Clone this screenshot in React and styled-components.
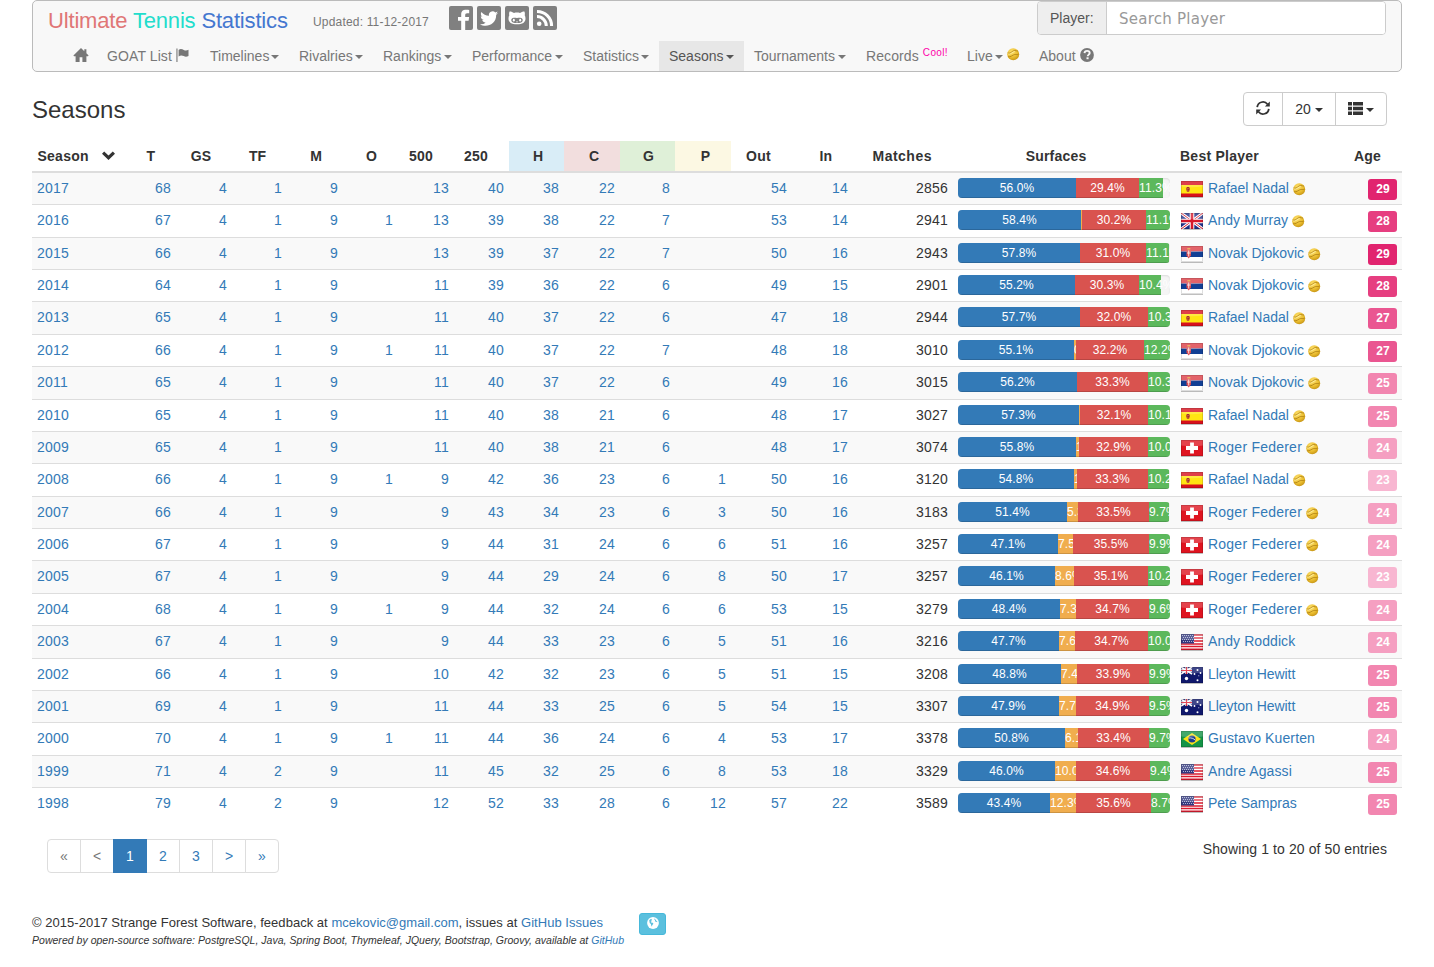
import React from 'react';
import styled, { createGlobalStyle } from 'styled-components';

const GlobalStyle = createGlobalStyle`
  * { box-sizing: border-box; }
  body {
    margin: 0;
    background: #fff;
    color: #333;
    font: 14px/20px "Liberation Sans", Arial, sans-serif;
    overflow: hidden;
  }
  svg { display: block; flex: none; }
`;

const Page = styled.div`
  width: 1370px;
  margin-left: 32px;
`;

/* ---------- navbar ---------- */

const Navbar = styled.header`
  height: 72px;
  background: #f8f8f8;
  border: 1px solid #bbb;
  border-radius: 5px;
`;

const NavTop = styled.div`
  display: flex;
  height: 40px;
  padding-left: 15px;
`;

const Brand = styled.a`
  width: 265px;
  padding-top: 7px;
  font-size: 22px;
  line-height: 26px;
  letter-spacing: -0.17px;
  white-space: nowrap;
`;

const BrandWord = styled.span`
  color: ${(p) => p.$color};
`;

const Updated = styled.span`
  width: 136px;
  padding-top: 11px;
  font-size: 12px;
  letter-spacing: 0.18px;
  color: #777;
  white-space: nowrap;
`;

const Social = styled.div`
  display: flex;
  gap: 4px;
  padding-top: 5px;
`;

const Search = styled.div`
  display: flex;
  width: 349px;
  height: 34px;
  margin-left: auto;
  margin-right: 15px;
  border: 1px solid #ccc;
  border-radius: 4px;
  background: #fff;
  overflow: hidden;
`;

const SearchLabel = styled.label`
  width: 69px;
  padding: 6px 12px;
  background: #eee;
  border-right: 1px solid #ccc;
  color: #555;
  line-height: 20px;
`;

const SearchInput = styled.input`
  flex: 1;
  min-width: 0;
  padding: 1px 12px 0;
  border: 0;
  outline: 0;
  background: #fff;
  font: 15px "DejaVu Sans", Verdana, sans-serif;
  letter-spacing: 0.25px;
  &::placeholder { color: #999; opacity: 1; }
`;

const NavMenu = styled.nav`
  display: flex;
  height: 30px;
  padding-left: 30px;
`;

const NavItem = styled.a`
  display: flex;
  align-items: center;
  width: ${(p) => p.$w}px;
  height: 30px;
  padding-left: 10px;
  letter-spacing: ${(p) => p.$ls || 0}px;
  color: ${(p) => (p.$active ? '#555' : '#777')};
  background: ${(p) => (p.$active ? '#e7e7e7' : 'transparent')};
  white-space: nowrap;
`;

const Caret = styled.i`
  width: 0;
  height: 0;
  margin-left: ${(p) => p.$gap ?? 2}px;
  margin-top: 2px;
  border: 4px solid transparent;
  border-top-color: currentColor;
  border-bottom: 0;
`;

const NavIcon = styled.span`
  display: inline-flex;
  margin-left: ${(p) => p.$gap || 0}px;
  margin-bottom: ${(p) => p.$lift || 0}px;
`;

const Cool = styled.sup`
  margin-left: 4px;
  margin-bottom: 7px;
  font-size: 10px;
  line-height: 10px;
  letter-spacing: 0.35px;
  color: #f0a;
`;

/* ---------- heading and toolbar ---------- */

const HeadingRow = styled.div`
  display: flex;
  justify-content: space-between;
  height: 69px;
  padding: 20px 15px 0 0;
`;

const Title = styled.h1`
  margin: 3px 0 0;
  font-size: 24px;
  font-weight: 400;
  line-height: 30px;
`;

const ButtonGroup = styled.div`
  display: flex;
  width: 144px;
  height: 34px;
  border: 1px solid #ccc;
  border-radius: 4px;
`;

const ToolButton = styled.button`
  display: flex;
  align-items: center;
  justify-content: center;
  width: ${(p) => p.$w}px;
  padding: 0;
  border: 0;
  border-left: ${(p) => (p.$first ? '0' : '1px solid #ccc')};
  background: none;
  color: #333;
  font: inherit;
`;

/* ---------- table ---------- */

const columns = `88px 56px 56px 55px 56px 55px 56px 55px 55px 56px 55px 56px 61px 61px 100px 222px 150px 77px`;

const HeadRow = styled.div`
  display: grid;
  grid-template-columns: ${columns};
  height: 32px;
  border-bottom: 2px solid #ddd;
  font-weight: 700;
`;

const HeadCell = styled.div`
  padding: 5px 21px 5px 5px;
  text-align: ${(p) => p.$align || 'right'};
  background: ${(p) => p.$bg || 'transparent'};
  letter-spacing: ${(p) => p.$ls || 0}px;
  white-space: nowrap;
`;

const SortHead = styled.div`
  display: flex;
  gap: 13px;
  padding: 5px 0 5px 5.5px;
  letter-spacing: 0.25px;
`;

const SortMark = styled.span`
  padding-top: 5px;
`;

const Row = styled.div`
  display: grid;
  grid-template-columns: ${columns};
  height: ${(p) => (p.$first ? 31.2 : 32.4)}px;
  padding-top: ${(p) => (p.$first ? 4.8 : 5)}px;
  border-top: ${(p) => (p.$first ? '0' : '1px solid #ddd')};
  background: ${(p) => (p.$odd ? '#f9f9f9' : '#fff')};
  color: #337ab7;
`;

const Cell = styled.div`
  padding: 0 5px;
  text-align: ${(p) => (p.$left ? 'left' : 'right')};
  color: ${(p) => (p.$plain ? '#333' : 'inherit')};
  letter-spacing: 0.2px;
`;

const Bar = styled.div`
  display: flex;
  width: 212px;
  height: 20px;
  margin-left: 5px;
  border-radius: 4px;
  overflow: hidden;
  background: #f5f5f5;
  box-shadow: inset 0 1px 2px rgba(0, 0, 0, 0.1);
`;

const Segment = styled.span`
  flex: none;
  height: 20px;
  background: ${(p) => p.$color};
  box-shadow: inset 0 -1px 0 rgba(0, 0, 0, 0.15);
  color: #fff;
  font-size: 12px;
  letter-spacing: 0.12px;
  text-align: center;
  white-space: nowrap;
`;

const Player = styled.div`
  display: flex;
  padding-left: 5px;
  letter-spacing: ${(p) => p.$ls || 0}px;
  white-space: nowrap;
`;

const FlagBox = styled.span`
  width: 28px;
  padding: 3px 0 0 1px;
`;

const BallBox = styled.span`
  padding: 5px 0 0 4px;
`;

const AgeCell = styled.div`
  display: flex;
  justify-content: flex-end;
  padding: 1px 5px 0 0;
`;

const AgeBadge = styled.span`
  width: 29px;
  height: 21px;
  padding-left: 1px;
  border-radius: 3px;
  background: ${(p) => p.$color};
  color: #fff;
  font-size: 12px;
  font-weight: 700;
  line-height: 20px;
  letter-spacing: 0.2px;
  text-align: center;
`;

/* ---------- below the table ---------- */

const TableFooter = styled.div`
  display: flex;
  justify-content: space-between;
  height: 54px;
  margin-top: 19.2px;
  padding: 0 15px;
`;

const Pager = styled.ul`
  display: flex;
  margin: 0;
  padding: 0;
  list-style: none;
`;

const PagerItem = styled.li`
  width: 34px;
  height: 34px;
  margin-right: -1px;
  padding: 6px 0;
  border: 1px solid ${(p) => (p.$active ? '#337ab7' : '#ddd')};
  position: relative;
  z-index: ${(p) => (p.$active ? 1 : 0)};
  background: ${(p) => (p.$active ? '#337ab7' : '#fff')};
  color: ${(p) => (p.$active ? '#fff' : p.$disabled ? '#777' : '#337ab7')};
  text-align: center;
  &:first-child { border-radius: 4px 0 0 4px; }
  &:last-child { border-radius: 0 4px 4px 0; }
`;

const Showing = styled.div`
  letter-spacing: 0.1px;
`;

const Footer = styled.footer`
  display: flex;
  gap: 15px;
  padding-top: 20px;
`;

const FooterText = styled.div`
  width: 592px;
  white-space: nowrap;
`;

const Copyright = styled.div`
  font-size: 13px;
  line-height: 20px;
  letter-spacing: 0.03px;
`;

const Powered = styled.div`
  font-size: 10.5px;
  font-style: italic;
  line-height: 14px;
  letter-spacing: 0.025px;
`;

const Link = styled.a`
  color: #337ab7;
`;

const GlobeButton = styled.button`
  display: grid;
  place-items: center;
  width: 27px;
  height: 22px;
  padding: 0 0 2px;
  border: 1px solid #46b8da;
  border-radius: 3px;
  background: #5bc0de;
  color: #fff;
`;

/* ---------- icons ---------- */

const HomeIcon = () => (
  <svg width="16" height="16" viewBox="0 0 16 16" fill="currentColor">
    <path d="M8 0 .4 7.4l.6.9h1.6V14h4V9.3h2.8V14h4V8.3H15l.6-.9-2.2-2.2V1.2h-2.1v2z" />
  </svg>
);

const FlagIcon = () => (
  <svg width="13" height="14" viewBox="0 0 13 14" fill="currentColor">
    <path d="M.4.6h1.1V14H.4z" />
    <path d="M2.6 1.9C4.6.3 6.3 1.3 7.8 2c1.6.8 3.3.7 4.7-.3v6.2c-1.6 1-3.2 1-4.8.2-1.700-.8-3.400-.9-5.100.5z" />
  </svg>
);

const QuestionIcon = () => (
  <svg width="14" height="14" viewBox="0 0 14 14">
    <circle cx="7" cy="7" r="6.9" fill="currentColor" />
    <path d="M4.500 5.100C4.600 3.600 5.600 2.900 7.100 2.900s2.600.8 2.600 2.100c0 1.500-2 1.700-2 3.200" fill="none" stroke="#f8f8f8" strokeWidth="1.900" />
    <path d="M6.500 9.300h2.100v1.900H6.500z" fill="#f8f8f8" />
  </svg>
);

const RefreshIcon = () => (
  <svg width="14" height="16" viewBox="0 0 14 16" fill="none" stroke="currentColor" strokeWidth="1.800">
    <path d="M1.200 6.200A5.800 5.800 0 0 1 11.500 3.200M12.800 7.800A5.800 5.800 0 0 1 2.500 10.800" />
    <path d="M13.800 .6v4.900H8.900zM.2 13.400V8.500h4.900z" fill="currentColor" stroke="none" />
  </svg>
);

const ListIcon = () => (
  <svg width="15" height="14" viewBox="0 0 15 14" fill="currentColor">
    <path d="M0 0h4v3.500H0zM5 0h10v3.500H5zM0 4.700h4v3.500H0zM5 4.700h10v3.500H5zM0 9.400h4v3.500H0zM5 9.400h10v3.500H5z" />
  </svg>
);

const ChevronIcon = () => (
  <svg width="13" height="9" viewBox="0 0 13 9" fill="currentColor">
    <path d="M2.200.5 6.500 4.500 10.800.5 13 2.700 6.500 9 0 2.700z" />
  </svg>
);

const GlobeIcon = () => (
  <svg width="12" height="12" viewBox="0 0 12 12">
    <circle cx="6" cy="6" r="5.900" fill="#fff" />
    <path d="M2.200 3.200 4 1.800l1 .5-.8 1 .8.700-1.200.8.3.8 1.600.2.700 1-1.200 1.400-.2 1.500-.8-1.200-.3-1.500-1.200-1zM7.500 1.400l.9.500-.4.700 1.400.5-.4.8 1.200.4v1l-1.300-.5-1-.6.2-1-.8-.6z" fill="#5bc0de" />
  </svg>
);

const BallIcon = () => (
  <svg width="13" height="13" viewBox="0 0 13 13">
    <defs>
      <radialGradient id="ball" cx=".4" cy=".3" r=".8">
        <stop offset="0" stopColor="#ffe26e" />
        <stop offset=".6" stopColor="#e8ba2c" />
        <stop offset="1" stopColor="#bd8a12" />
      </radialGradient>
    </defs>
    <circle cx="6.200" cy="6.200" r="6" fill="url(#ball)" />
    <path d="M.7 4.900C3.300 6.200 5 2.700 7.700 2.500c1.500-.1 2.400.8 3.400.6M1.100 8.700c2.500.9 4.300-1.900 6.700-2.200 1.500-.2 2.400.4 3.900-.4" fill="none" stroke="#a97a10" strokeWidth=".9" opacity=".85" />
    <path d="M.9 6C3.600 7.100 5.300 3.800 7.800 3.500" fill="none" stroke="#fff3b0" strokeWidth=".7" />
  </svg>
);

const SocialTile = ({ children }) => (
  <svg width="24" height="24" viewBox="0 0 24 24" fill="#fff">
    <rect width="24" height="24" rx="2" fill="#808080" />
    {children}
  </svg>
);

const FacebookIcon = () => (
  <SocialTile>
    <path d="M12.200 24v-9.300H9V11h3.200V8.300C12.200 5 14.100 3.700 17 3.700c1.400 0 2.400.1 3.200.2v3.400h-2c-1.600 0-2 .8-2 1.900V11h3.900l-.5 3.700h-3.400V24z" />
  </SocialTile>
);

const TwitterIcon = () => (
  <SocialTile>
    <path d="M21 6.900c-.7.3-1.300.5-2 .6.700-.5 1.300-1.100 1.600-2-.7.400-1.500.7-2.300.9a3.700 3.700 0 0 0-6.300 3.400C8.900 9.700 6.200 8.200 4.400 5.900c-1 1.700-.5 3.800 1.100 4.900-.6 0-1.200-.2-1.700-.5 0 1.800 1.300 3.300 3 3.700-.6.100-1.100.2-1.700.1.500 1.500 1.800 2.500 3.500 2.600A7.500 7.500 0 0 1 3 18.200c5.500 3.500 16.200 1.300 16.200-9.400.700-.5 1.300-1.100 1.800-1.900z" />
  </SocialTile>
);

const GithubIcon = () => (
  <SocialTile>
    <path d="M4.600 5.400c1.500-.1 3 .5 4.400 1.500 2-.4 4-.4 6 0 1.400-1 2.900-1.600 4.400-1.500.6 1.400.6 2.700.3 3.900.6.900.8 2 .8 3.100 0 4-3 5.800-8.500 5.800s-8.500-1.800-8.500-5.800c0-1.100.2-2.200.8-3.100-.3-1.200-.3-2.500.3-3.900z" />
    <path d="M8 11.900c1.400-.3 2.700.1 4 .1s2.600-.4 4-.1c1.300.3 1.900 1.200 1.700 2.500-.3 1.900-2.200 2.500-5.700 2.500s-5.400-.6-5.700-2.500c-.2-1.300.4-2.200 1.700-2.500z" fill="#808080" />
    <ellipse cx="8.800" cy="14.200" rx="1" ry="1.400" />
    <ellipse cx="15.200" cy="14.200" rx="1" ry="1.400" />
    <path d="M11.200 15.400h1.600v.8h-1.600z" />
  </SocialTile>
);

const RssIcon = () => (
  <SocialTile>
    <circle cx="6.200" cy="17.800" r="2.300" />
    <path d="M4 10.600A9.300 9.300 0 0 1 13.300 19.900M4 5.400A14.500 14.500 0 0 1 18.600 19.900" fill="none" stroke="#fff" strokeWidth="3" />
  </SocialTile>
);

const flagArt = {
  es: (
    <>
      <path d="M0 0h22v16H0z" fill="#d8101c" />
      <path d="M0 4h22v8.500H0z" fill="#ffe512" />
      <path d="M5 6.500h4v2l-1 2.500H6L5 8.500z" fill="#c4622d" />
      <path d="M6 6h2v1H6zM6.500 8h1.500v1.500H6.500z" fill="#9c2f38" />
    </>
  ),
  gb: (
    <>
      <path d="M0 0h22v16H0z" fill="#1f2f86" />
      <path d="m0 0 22 16M22 0 0 16" stroke="#fff" strokeWidth="3" />
      <path d="m0 0 22 16M22 0 0 16" stroke="#d7172b" strokeWidth="1" />
      <path d="M11 0v16M0 8h22" stroke="#fff" strokeWidth="4.600" />
      <path d="M11 0v16M0 8h22" stroke="#d7172b" strokeWidth="2.600" />
    </>
  ),
  rs: (
    <>
      <path d="M0 0h22v16H0z" fill="#fff" />
      <path d="M0 0h22v5.500H0z" fill="#dc3c45" />
      <path d="M0 5.500h22v5.500H0z" fill="#123f94" />
      <path d="M5.500 4h4.500v5.500L7.700 12.500 5.500 9.500z" fill="#dc4a50" />
      <path d="M6.300 2h3v1.500h-3z" fill="#e8a13b" />
      <path d="M7.700 4.500v6M6 7h3.500" stroke="#fff" strokeWidth=".8" />
    </>
  ),
  ch: (
    <>
      <path d="M0 0h22v16H0z" fill="#df1420" />
      <path d="M9.100 2.500h3.800v3.600H17v3.800h-4.100v3.600H9.100V9.900H5V6.100h4.100z" fill="#fff" />
    </>
  ),
  us: (
    <>
      <path d="M0 0h22v16H0z" fill="#fff" />
      <path d="M0 1h22M0 4h22M0 7h22M0 10h22M0 12.500h22M0 15.200h22" stroke="#dc1b2e" strokeWidth="1.500" />
      <path d="M0 0h13v9.500H0z" fill="#33397f" />
      <path d="M1 1.500h12M2 3.500h11M1 5.500h12M2 7.500h11" stroke="#b9bedb" strokeWidth=".9" strokeDasharray="1 1" />
    </>
  ),
  au: (
    <>
      <path d="M0 0h22v16H0z" fill="#10186c" />
      <path d="m0 0 11 7M11 0 0 7" stroke="#fff" strokeWidth="1.600" />
      <path d="M5.500 0v7M0 3.500h11" stroke="#fff" strokeWidth="2.400" />
      <path d="M5.500 0v7M0 3.500h11" stroke="#dc1b2e" strokeWidth="1.200" />
      <g fill="#fff">
        <circle cx="5.500" cy="11.500" r="1.700" />
        <circle cx="16.500" cy="3" r="1" />
        <circle cx="13.500" cy="7" r=".9" />
        <circle cx="19.500" cy="6" r=".9" />
        <circle cx="16.500" cy="13.300" r="1" />
        <circle cx="17.800" cy="8.800" r=".5" />
      </g>
    </>
  ),
  br: (
    <>
      <path d="M0 0h22v16H0z" fill="#149447" />
      <path d="m11 2 9 6-9 6-9-6z" fill="#fbe219" />
      <circle cx="11" cy="8" r="3.600" fill="#1d3d8c" />
      <path d="M7.600 7c2.600-.4 5 .4 6.700 2.200" fill="none" stroke="#fff" strokeWidth=".8" />
    </>
  ),
};

const Flag = ({ code }) => (
  <svg width="22" height="18" viewBox="0 0 22 18">
    <path d="M0 1h22v16H0z" fill="#000" opacity=".25" />
    {flagArt[code]}
    <path d="M0 0h22v5.500Q11 7 0 5.500z" fill="#fff" opacity=".2" />
    <path d="M.5.5h21v15H.5z" fill="none" stroke="#000" opacity=".13" />
  </svg>
);

/* ---------- data ---------- */

const blue = '#337ab7';
const orange = '#f0ad4e';
const red = '#d9534f';
const green = '#5cb85c';

const ageColors = { 29: '#e1246f', 28: '#e63e80', 27: '#ea5691', 25: '#f286b0', 24: '#f59fc1', 23: '#f8b6d1' };

/* name, flag, still active, tracking */
const players = {
  nadal: ['Rafael Nadal', 'es', true, 0],
  murray: ['Andy Murray', 'gb', true, 0.07],
  djokovic: ['Novak Djokovic', 'rs', true, -0.03],
  federer: ['Roger Federer', 'ch', true, 0.23],
  roddick: ['Andy Roddick', 'us', false, 0.07],
  hewitt: ['Lleyton Hewitt', 'au', false, -0.05],
  kuerten: ['Gustavo Kuerten', 'br', false, 0.13],
  agassi: ['Andre Agassi', 'us', false, 0.12],
  sampras: ['Pete Sampras', 'us', false, 0],
};

/* counts: T GS TF M O 500 250 H C G P Out In; surfaces: [label, right edge] for hard, carpet, clay, grass */
const seasons = [
  [2017, '68 4 1 9 - 13 40 38 22 8 - 54 14', 2856, ['56.0%', 118], null, ['29.4%', 181], ['11.3%', 205], 'nadal', 29],
  [2016, '67 4 1 9 1 13 39 38 22 7 - 53 14', 2941, ['58.4%', 123], ['', 124], ['30.2%', 188], ['11.1%', 212], 'murray', 28],
  [2015, '66 4 1 9 - 13 39 37 22 7 - 50 16', 2943, ['57.8%', 122], null, ['31.0%', 188], ['11.1%', 211], 'djokovic', 29],
  [2014, '64 4 1 9 - 11 39 36 22 6 - 49 15', 2901, ['55.2%', 117], null, ['30.3%', 181], ['10.4%', 203], 'djokovic', 28],
  [2013, '65 4 1 9 - 11 40 37 22 6 - 47 18', 2944, ['57.7%', 122], null, ['32.0%', 190], ['10.3%', 212], 'nadal', 27],
  [2012, '66 4 1 9 1 11 40 37 22 7 - 48 18', 3010, ['55.1%', 116], ['0.5%', 118], ['32.2%', 186], ['12.2%', 212], 'djokovic', 27],
  [2011, '65 4 1 9 - 11 40 37 22 6 - 49 16', 3015, ['56.2%', 119], null, ['33.3%', 190], ['10.3%', 212], 'djokovic', 25],
  [2010, '65 4 1 9 - 11 40 38 21 6 - 48 17', 3027, ['57.3%', 121], ['', 122], ['32.1%', 190], ['10.1%', 212], 'nadal', 25],
  [2009, '65 4 1 9 - 11 40 38 21 6 - 48 17', 3074, ['55.8%', 118], ['1.3%', 121], ['32.9%', 190], ['10.0%', 212], 'federer', 24],
  [2008, '66 4 1 9 1 9 42 36 23 6 1 50 16', 3120, ['54.8%', 116], ['1.6%', 119], ['33.3%', 190], ['10.2%', 211], 'nadal', 23],
  [2007, '66 4 1 9 - 9 43 34 23 6 3 50 16', 3183, ['51.4%', 109], ['5.3%', 120], ['33.5%', 191], ['9.7%', 211], 'federer', 24],
  [2006, '67 4 1 9 - 9 44 31 24 6 6 51 16', 3257, ['47.1%', 100], ['7.5%', 115], ['35.5%', 191], ['9.9%', 212], 'federer', 24],
  [2005, '67 4 1 9 - 9 44 29 24 6 8 50 17', 3257, ['46.1%', 97], ['8.6%', 116], ['35.1%', 190], ['10.2%', 212], 'federer', 23],
  [2004, '68 4 1 9 1 9 44 32 24 6 6 53 15', 3279, ['48.4%', 102], ['7.3%', 118], ['34.7%', 191], ['9.6%', 212], 'federer', 24],
  [2003, '67 4 1 9 - 9 44 33 23 6 5 51 16', 3216, ['47.7%', 101], ['7.6%', 117], ['34.7%', 190], ['10.0%', 212], 'roddick', 24],
  [2002, '66 4 1 9 - 10 42 32 23 6 5 51 15', 3208, ['48.8%', 103], ['7.4%', 119], ['33.9%', 191], ['9.9%', 212], 'hewitt', 25],
  [2001, '69 4 1 9 - 11 44 33 25 6 5 54 15', 3307, ['47.9%', 101], ['7.7%', 118], ['34.9%', 191], ['9.5%', 212], 'hewitt', 25],
  [2000, '70 4 1 9 1 11 44 36 24 6 4 53 17', 3378, ['50.8%', 107], ['6.1%', 120], ['33.4%', 191], ['9.7%', 212], 'kuerten', 24],
  [1999, '71 4 2 9 - 11 45 32 25 6 8 53 18', 3329, ['46.0%', 97], ['10.0%', 118], ['34.6%', 192], ['9.4%', 212], 'agassi', 25],
  [1998, '79 4 2 9 - 12 52 33 28 6 12 57 22', 3589, ['43.4%', 92], ['12.3%', 118], ['35.6%', 193], ['8.7%', 212], 'sampras', 25],
];

const headers = [
  ['T'], ['GS'], ['TF'], ['M'], ['O'], ['500', null, 0.2], ['250', null, 0.2],
  ['H', '#d9edf7'], ['C', '#f2dede'], ['G', '#dff0d8'], ['P', '#fcf8e3'],
  ['Out', null, 0.3], ['In'], ['Matches', null, 0.5],
];

const SurfaceBar = ({ parts }) => {
  let start = 0;
  return (
    <Bar>
      {parts.map((part, i) => {
        if (!part) return null;
        const width = part[1] - start;
        start = part[1];
        return (
          <Segment key={i} $color={[blue, orange, red, green][i]} style={{ width }}>
            {part[0]}
          </Segment>
        );
      })}
    </Bar>
  );
};

const SeasonRow = ({ data, index }) => {
  const [year, counts, matches, hard, carpet, clay, grass, who, age] = data;
  const [name, code, active, tracking] = players[who];
  return (
    <Row $first={index === 0} $odd={index % 2 === 0}>
      <Cell $left>{year}</Cell>
      {counts.split(' ').map((n, i) => (
        <Cell key={i}>{n === '-' ? '' : n}</Cell>
      ))}
      <Cell $plain>{matches}</Cell>
      <SurfaceBar parts={[hard, carpet, clay, grass]} />
      <Player $ls={tracking}>
        <FlagBox><Flag code={code} /></FlagBox>
        {name}
        {active && <BallBox><BallIcon /></BallBox>}
      </Player>
      <AgeCell><AgeBadge $color={ageColors[age]}>{age}</AgeBadge></AgeCell>
    </Row>
  );
};

export default function App() {
  return (
    <>
      <GlobalStyle />
      <Page>
        <Navbar>
          <NavTop>
            <Brand>
              <BrandWord $color="#e07676">Ultimate</BrandWord>{' '}
              <BrandWord $color="#22ddcc">Tennis</BrandWord>{' '}
              <BrandWord $color="#4477d0">Statistics</BrandWord>
            </Brand>
            <Updated>Updated: 11-12-2017</Updated>
            <Social>
              <FacebookIcon />
              <TwitterIcon />
              <GithubIcon />
              <RssIcon />
            </Social>
            <Search>
              <SearchLabel>Player:</SearchLabel>
              <SearchInput placeholder="Search Player" />
            </Search>
          </NavTop>
          <NavMenu>
            <NavItem $w={34}><HomeIcon /></NavItem>
            <NavItem $w={103} $ls={0.1}>GOAT List<NavIcon $gap={4} $lift={2}><FlagIcon /></NavIcon></NavItem>
            <NavItem $w={89}>Timelines<Caret /></NavItem>
            <NavItem $w={84}>Rivalries<Caret /></NavItem>
            <NavItem $w={89}>Rankings<Caret $gap={3} /></NavItem>
            <NavItem $w={111}>Performance<Caret $gap={3} /></NavItem>
            <NavItem $w={86}>Statistics<Caret /></NavItem>
            <NavItem $w={85} $active>Seasons<Caret $gap={3} /></NavItem>
            <NavItem $w={112}>Tournaments<Caret $gap={3} /></NavItem>
            <NavItem $w={101} $ls={0.1}>Records<Cool>Cool!</Cool></NavItem>
            <NavItem $w={72}>Live<Caret /><NavIcon $gap={4} $lift={4}><BallIcon /></NavIcon></NavItem>
            <NavItem $w={76}>About<NavIcon $gap={4} $lift={2}><QuestionIcon /></NavIcon></NavItem>
          </NavMenu>
        </Navbar>

        <HeadingRow>
          <Title>Seasons</Title>
          <ButtonGroup>
            <ToolButton $first $w={38}><RefreshIcon /></ToolButton>
            <ToolButton $w={53}>20<Caret $gap={4} /></ToolButton>
            <ToolButton $w={51}><ListIcon /><Caret $gap={3} /></ToolButton>
          </ButtonGroup>
        </HeadingRow>

        <HeadRow>
          <SortHead>Season<SortMark><ChevronIcon /></SortMark></SortHead>
          {headers.map(([label, bg, ls]) => (
            <HeadCell key={label} $bg={bg} $ls={ls}>{label}</HeadCell>
          ))}
          <HeadCell $align="center" $ls={0.2}>Surfaces</HeadCell>
          <HeadCell $align="left" $ls={0.25}>Best Player</HeadCell>
          <HeadCell $ls={0.2}>Age</HeadCell>
        </HeadRow>
        {seasons.map((s, i) => (
          <SeasonRow key={s[0]} data={s} index={i} />
        ))}

        <TableFooter>
          <Pager>
            <PagerItem $disabled>«</PagerItem>
            <PagerItem $disabled>&lt;</PagerItem>
            <PagerItem $active>1</PagerItem>
            <PagerItem>2</PagerItem>
            <PagerItem>3</PagerItem>
            <PagerItem>&gt;</PagerItem>
            <PagerItem>»</PagerItem>
          </Pager>
          <Showing>Showing 1 to 20 of 50 entries</Showing>
        </TableFooter>

        <Footer>
          <FooterText>
            <Copyright>
              © 2015-2017 Strange Forest Software, feedback at <Link>mcekovic@gmail.com</Link>, issues at <Link>GitHub Issues</Link>
            </Copyright>
            <Powered>
              Powered by open-source software: PostgreSQL, Java, Spring Boot, Thymeleaf, JQuery, Bootstrap, Groovy, available at <Link>GitHub</Link>
            </Powered>
          </FooterText>
          <GlobeButton><GlobeIcon /></GlobeButton>
        </Footer>
      </Page>
    </>
  );
}
